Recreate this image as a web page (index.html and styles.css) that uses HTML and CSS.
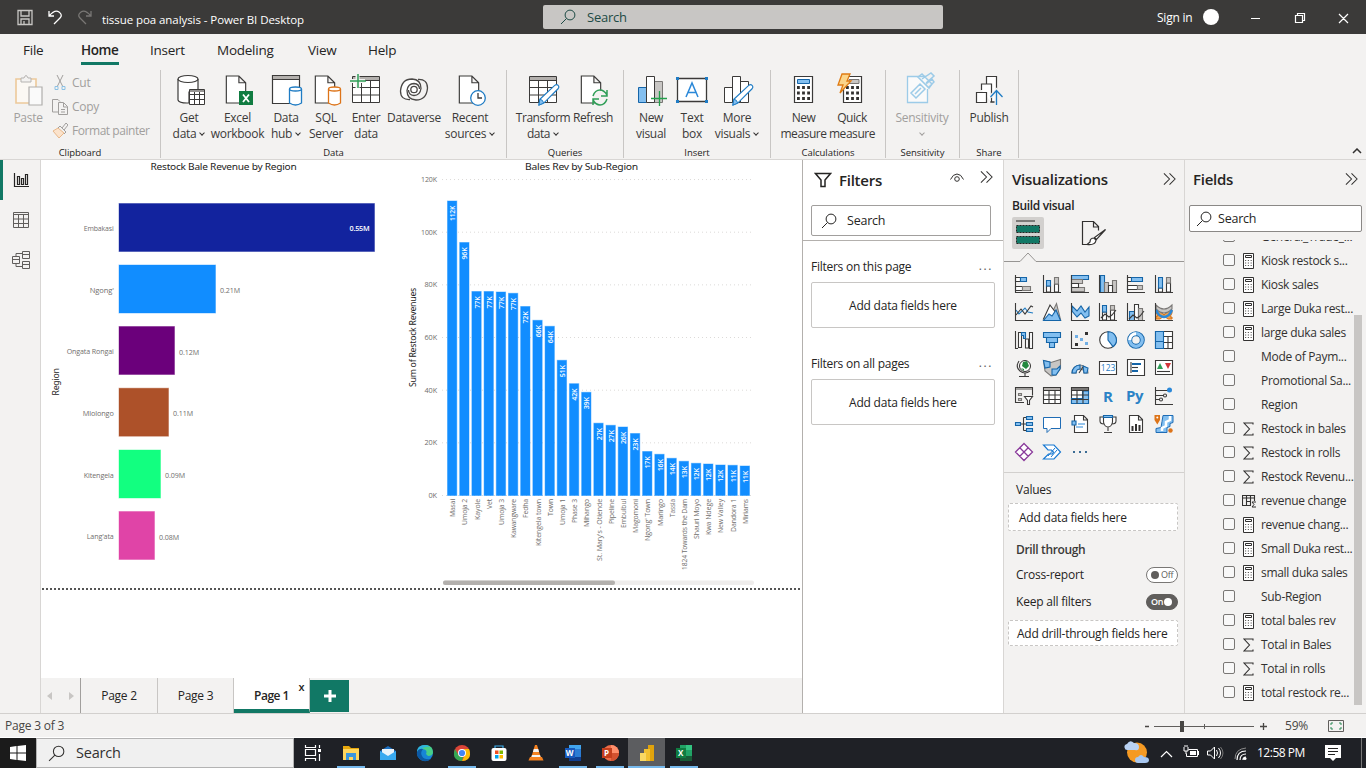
FILE: index.html
```html
<!DOCTYPE html>
<html lang="en">
<head>
<meta charset="utf-8">
<title>tissue poa analysis - Power BI Desktop</title>
<link rel="stylesheet" href="styles.css">
</head>
<body>
<svg class="defs" width="0" height="0">
  <symbol id="calc" viewBox="0 0 11 16"><path d="M.5.5h10v15H.5z" fill="#fff" stroke="#323130"/><path d="M2.500 2.500h6v2h-6z" fill="none" stroke="#323130"/><path d="M2 7.500h7M2 10h7M2 12.500h7" stroke="#605e5c" stroke-dasharray="1.200 1.600"/></symbol>
  <symbol id="sum" viewBox="0 0 11 16"><path d="M10 3.500V2H1l5.500 6L1 14h9v-1.500" fill="none" stroke="#323130" stroke-width="1.100"/></symbol>
  <symbol id="tsum" viewBox="0 0 15 16"><path d="M9 12.500H.5v-10h12V8M.5 5h12M4.500 3v9M8.500 3v9M4 8.500h5" fill="none" stroke="#323130" stroke-width="1.100"/><path d="M14 9H10l2 2.500-2 2.500h4" fill="none" stroke="#323130"/></symbol>
  <symbol id="mag" viewBox="0 0 16 16"><circle cx="10" cy="6" r="4.900" fill="none" stroke="currentColor"/><path d="M6.500 9.500 1 15" stroke="currentColor" fill="none"/></symbol>
  <symbol id="chev2" viewBox="0 0 14 14"><path d="M1 1l6 6-6 6M7 1l6 6-6 6" fill="none" stroke="#323130" stroke-width="1.100"/></symbol>
  <symbol id="doc" viewBox="0 0 22 30"><path d="M1 1h13l7 7v21H1zM14 1v7h7" fill="#fff" stroke="#3b3a39" stroke-width="1.200"/></symbol>
  <symbol id="pen" viewBox="0 0 24 24"><path d="M3 17 18.500 2.500q2-1.500 3.500 0t0 3.500L7 21l-5 2z" fill="#fff" stroke="#1f7cc4" stroke-width="1.200"/><path d="M3 17q3 0 4 4l-5 2z" fill="#83bff0" stroke="#1f7cc4"/></symbol>
</svg>

<header class="title">
  <svg class="qat" width="96" height="34" viewBox="0 0 96 34" fill="none" stroke="#c8c6c4" stroke-width="1.300"><path d="M18 10.500h14v14H18zM21 11v5h8v-5M21 24v-5h8v5M24 21v3"/><path d="M49 11v5h5M49 16q6-7 10-4t1 6l-6 6" stroke="#fff"/><path d="M91 11v5h-5M91 16q-6-7-10-4t-1 6l6 6" stroke="#797775"/></svg>
  <span class="title-text">tissue poa analysis - Power BI Desktop</span>
  <div class="title-search"><svg width="16" height="16"><use href="#mag"/></svg>Search</div>
  <span class="signin">Sign in</span><i class="avatar"></i>
  <svg class="winctl" width="100" height="34" viewBox="0 0 100 34" fill="none" stroke="#fff" stroke-width="1.200"><path d="M4 18.500h9M48.500 15.500h7v7h-7zM50.500 15v-1.500h7v7H56M92 14l9 9M101 14l-9 9" transform="translate(-1)"/></svg>
</header>

<nav class="tabs"><span>File</span><span class="on">Home</span><span>Insert</span><span>Modeling</span><span>View</span><span>Help</span></nav>

<section class="ribbon">
  <div class="grp g-clip">
    <div class="items">
      <div class="it paste dis"><svg width="32" height="32" viewBox="0 0 32 32"><path d="M4 5h20v24H4z" fill="#fbf8f4" stroke="#edc99a" stroke-width="1.600"/><path d="M9 8V4h3q2-5 4 0h3v4z" fill="#f3f2f1" stroke="#b5b3b1"/><path d="M17 13h13v18H17z" fill="#fafafa" stroke="#b0aeac" stroke-width="1.200"/></svg><b>Paste</b></div>
      <div class="mini dis">
        <span><svg width="16" height="16" viewBox="0 0 16 16" fill="none" stroke="#a19f9d"><path d="M5 0l5.500 11M11 0 5.500 11"/><path d="M3 11.500h3v3H3zM10 11.500h3v3h-3z" stroke="#8cc1e4"/></svg>Cut</span>
        <span><svg width="16" height="16" viewBox="0 0 16 16" fill="none" stroke="#a19f9d"><path d="M6 13H.5V.5H6l2 2M6.500 3.500h5l4 4v8h-9zM11.500 4v4h4M9 10.500h4M9 13h4"/></svg>Copy</span>
        <span class="fp"><svg width="16" height="16" viewBox="0 0 16 16" fill="none" stroke="#a19f9d"><path d="M1 8l5-3 6 5-5 5z" fill="#fbe3cc" stroke="#e8b88a"/><path d="M6 5l2-2 6 6-2 2M10 5l4-5 2 2-4 5"/></svg>Format painter</span>
      </div>
    </div>
    <em>Clipboard</em>
  </div>
  <div class="grp g-data">
    <div class="items">
      <div class="it w42"><svg width="32" height="32" viewBox="-2 0 32 32"><path d="M3 5v21q1 3 9 3h2V18h9V5" fill="#fff" stroke="#3b3a39" stroke-width="1.200"/><ellipse cx="13" cy="5" rx="10" ry="3.500" fill="#fff" stroke="#3b3a39" stroke-width="1.200"/><path d="M14.500 15.500h15v15h-15zM14.500 20.500h15M14.500 25.500h15M19.500 18v12M24.500 18v12" fill="#fff" stroke="#3b3a39"/><path d="M15 16h14v2H15z" fill="#979593"/></svg><b>Get<br>data<i class="dn"></i></b></div>
      <div class="it w55"><svg width="32" height="32" viewBox="0 0 32 32"><use href="#doc" x="3" y="1" width="22" height="29"/><path d="M17 17h14v14H17z" fill="#107c41"/><path d="M21 20.500l6 7.500M27 20.500l-6 7.500" stroke="#fff" stroke-width="1.800"/></svg><b>Excel<br>workbook</b></div>
      <div class="it w42"><svg width="32" height="32" viewBox="0 0 32 32"><path d="M2.500 1.500h27v28h-27z" fill="#fff" stroke="#3b3a39" stroke-width="1.200"/><path d="M3 2h26v3H3z" fill="#b3b0ad"/><path d="M2.500 5.500h27" stroke="#3b3a39"/><path d="M19.500 15v14q6 4 12 0V15" fill="#fff" stroke="#1f7cc4" stroke-width="1.300"/><ellipse cx="25.500" cy="15" rx="6" ry="2" fill="#fff" stroke="#1f7cc4" stroke-width="1.300"/></svg><b>Data<br>hub<i class="dn"></i></b></div>
      <div class="it w38"><svg width="32" height="32" viewBox="0 0 32 32"><use href="#doc" x="4" y="1" width="22" height="29"/><path d="M18.500 15v14q6 4 12 0V15" fill="#fff" stroke="#dd7419" stroke-width="1.300"/><ellipse cx="24.500" cy="15" rx="6" ry="2" fill="#fff" stroke="#dd7419" stroke-width="1.300"/></svg><b>SQL<br>Server</b></div>
      <div class="it w42"><svg width="32" height="32" viewBox="0 0 32 32"><path d="M2.500 2.500h27v26h-27zM2.500 6.500h27M2.500 13.500h27M2.500 21h27M11.500 6v22M20.500 6v22" fill="#fff" stroke="#3b3a39"/><path d="M3 3h26v3H3z" fill="#b3b0ad"/><path d="M0 7h15M7.500 0v14" stroke="#f3f2f1" stroke-width="4"/><path d="M0 7h16M8 0v14" stroke="#2f9e57" stroke-width="1.500"/></svg><b>Enter<br>data</b></div>
      <div class="it w54"><svg width="32" height="32" viewBox="0 0 32 32" fill="none" stroke="#4a4846" stroke-width="1.300"><path d="M12 25.500Q2.500 26 2.500 17Q3.500 5 14 5Q23 5.500 23 14.500Q22 21.500 16 21.500Q10.500 21 10.500 16" fill="#fff"/><path d="M20 5.500Q29.500 5 29.500 14Q28.500 26 18 26Q9 25.500 9 16.500Q10 9.500 16 9.500Q21.500 10 21.500 15" /><circle cx="16" cy="15.500" r="3.200"/></svg><b>Dataverse</b></div>
      <div class="it w58"><svg width="32" height="32" viewBox="0 0 32 32"><use href="#doc" x="4" y="1" width="22" height="29"/><circle cx="24" cy="24" r="7.300" fill="#fff" stroke="#1f7cc4" stroke-width="1.300"/><path d="M24 19v5h4" fill="none" stroke="#3b3a39" stroke-width="1.300"/></svg><b>Recent<br>sources<i class="dn"></i></b></div>
    </div>
    <em>Data</em>
  </div>
  <div class="grp g-q">
    <div class="items">
      <div class="it w54 tight"><svg width="32" height="32" viewBox="0 0 32 32"><path d="M2.500 2.500h27v26h-27zM2.500 6.500h27M2.500 13.500h27M2.500 21h27M11.500 6v22M20.500 6v22" fill="#fff" stroke="#3b3a39"/><path d="M3 3h26v3H3z" fill="#b3b0ad"/><use href="#pen" x="10" y="9" width="23" height="23"/></svg><b>Transform<br>data<i class="dn"></i></b></div>
      <div class="it w46 tight"><svg width="32" height="32" viewBox="0 0 32 32"><use href="#doc" x="3" y="1" width="22" height="29"/><circle cx="23" cy="24" r="7.500" fill="#f3f2f1"/><path d="M16 22q2-6 7-6 4 0 7 5M30 16v6h-6M30 25q-2 6-7 6-4 0-7-5M16 31v-6h6" fill="none" stroke="#2f9e57" stroke-width="1.500"/></svg><b>Refresh</b></div>
    </div>
    <em>Queries</em>
  </div>
  <div class="grp g-ins">
    <div class="items">
      <div class="it w40"><svg width="32" height="32" viewBox="0 0 32 32"><path d="M3.500 13.500h8v15h-8z" fill="#83bff0" stroke="#1565a8"/><path d="M19.500 7.500h8v21h-8z" fill="#c8c6c4" stroke="#797775"/><path d="M11.500 2.500h8v26h-8z" fill="#fff" stroke="#3b3a39"/><path d="M16 24.500h16M24.500 17v15" stroke="#22a04b" stroke-width="1.300"/></svg><b>New<br>visual</b></div>
      <div class="it w42"><svg width="32" height="32" viewBox="0 0 32 32"><path d="M1.500 4.500h29v23h-29z" fill="#fff" stroke="#3b3a39" stroke-width="1.300"/><path d="M0 3h3v3H0zM29 3h3v3h-3zM0 26h3v3H0zM29 26h3v3h-3z" fill="#1f7cc4"/><path d="M10 23l6-14 6 14M12 18.500h8" fill="none" stroke="#2b88d8" stroke-width="1.500"/></svg><b>Text<br>box</b></div>
      <div class="it w48"><svg width="32" height="32" viewBox="0 0 32 32"><path d="M3.500 13.500h8v15h-8zM19.500 7.500h8v21h-8zM11.500 2.500h8v26h-8z" fill="#fff" stroke="#3b3a39"/><use href="#pen" x="10" y="9" width="23" height="23"/></svg><b>More<br>visuals<i class="dn"></i></b></div>
    </div>
    <em>Insert</em>
  </div>
  <div class="grp g-calc">
    <div class="items">
      <div class="it w47 tight"><svg width="32" height="32" viewBox="0 0 32 32"><path d="M6.500 2.500h18v26h-18z" fill="#fff" stroke="#3b3a39" stroke-width="1.200"/><path d="M9.500 5.500h12v4h-12z" fill="#83bff0" stroke="#1565a8"/><path d="M9 13.500h13M9 19h13M9 24.500h13" stroke="#323130" stroke-width="2.800" stroke-dasharray="2.800 2.300"/></svg><b>New<br>measure</b></div>
      <div class="it w50 tight"><svg width="32" height="32" viewBox="-1 0 32 32"><path d="M6.500 2.500h18v26h-18z" fill="#fff" stroke="#3b3a39" stroke-width="1.200"/><path d="M12 5.500h10v4H12z" fill="#c8c6c4" stroke="#797775"/><path d="M9 13.500h13M9 19h13M9 24.500h13" stroke="#323130" stroke-width="2.800" stroke-dasharray="2.800 2.300"/><path d="M5 0h8l-3 7h4L3 19l3-8H1z" fill="#fbd58a" stroke="#e07b12" stroke-width="1.300"/></svg><b>Quick<br>measure</b></div>
    </div>
    <em>Calculations</em>
  </div>
  <div class="grp g-sens">
    <div class="items">
      <div class="it w64 dis"><svg width="32" height="32" viewBox="0 0 32 32"><path d="M20 2.500H1.500v26h20V15" fill="#fafafa" stroke="#9ccbe8" stroke-width="1.300"/><path d="M5 19l9-9 5 5-9 9zM9 20l6-6M12 3l4-3 10 10-3 4zM16 5l9-6 3 3-8 7M20 10l6-5 2 3-5 5" fill="none" stroke="#9ccbe8" stroke-width="1.500"/></svg><b>Sensitivity<br><i class="dn"></i></b></div>
    </div>
    <em>Sensitivity</em>
  </div>
  <div class="grp g-share">
    <div class="items">
      <div class="it w58"><svg width="32" height="32" viewBox="-1 0 32 32"><path d="M12.500 10V2.500h10V28H17M7.500 16v-6h10v18.500M2.500 18.500h10v10h-10z" fill="#fff" stroke="#3b3a39" stroke-width="1.200"/><path d="M16 28h7" stroke="#3b3a39"/><path d="M22.500 31V17M16.500 23l6-6.500 6 6.500" stroke="#f3f2f1" stroke-width="4" fill="none"/><path d="M22.500 31V17M16.500 23l6-6.500 6 6.500" fill="none" stroke="#1f7cc4" stroke-width="1.300"/></svg><b>Publish</b></div>
    </div>
    <em>Share</em>
  </div>
  <svg class="collapse" width="10" height="6" viewBox="0 0 10 6"><path d="M1 5l4-4 4 4" fill="none" stroke="#323130" stroke-width="1.500"/></svg>
</section>

<main class="main">
  <aside class="rail">
    <div class="rv on"><svg width="18" height="18" viewBox="0 0 18 18" fill="none" stroke="#252423" stroke-width="1.200"><path d="M2.500 2v13.500H17M5.500 5.500h2v8h-2zM9.500 7.500h2v6h-2zM13.500 3.500h2v10h-2z"/></svg></div>
    <div class="rv"><svg width="18" height="18" viewBox="0 0 18 18" fill="none" stroke="#605e5c"><path d="M1.500 1.500h15v15h-15zM1.500 3.500h15M1.500 8h15M1.500 12.500h15M6.500 4v12M11.500 4v12"/></svg></div>
    <div class="rv"><svg width="18" height="18" viewBox="0 0 18 18" fill="none" stroke="#605e5c"><path d="M.5 5.500h7v7h-7zM.5 8.500h7M10.500.5h7v7h-7zM10.500 3.500h7M10.500 10.500h7v7h-7zM10.500 13.500h7M4 5.500v-3h6M4 12.500v3h6"/></svg></div>
  </aside>

  <section class="stage">
    <svg class="canvas" id="canvas" width="761" height="518" viewBox="41 160 761 518"></svg>
    <div class="pages">
      <div class="arrows"><i class="al"></i><i class="ar"></i></div>
      <div class="pg">Page 2</div><div class="pg">Page 3</div><div class="pg cur">Page 1<i>x</i></div>
      <div class="add"><svg width="12" height="12" viewBox="0 0 12 12"><path d="M0 6h12M6 0v12" stroke="#fff" stroke-width="3"/></svg></div>
    </div>
  </section>

  <section class="filters">
    <div class="fh"><svg width="18" height="16" viewBox="0 0 18 16"><path d="M1.500 1.500h15L11 8v6.500H7V8z" fill="none" stroke="#252423" stroke-width="1.500"/></svg><h2>Filters</h2><svg class="eye" width="14" height="10" viewBox="0 0 14 10" fill="none" stroke="#323130"><path d="M.5 6.500Q3 1 7 1t6.500 5.500"/><circle cx="7" cy="6" r="2.300"/></svg><svg width="13" height="14"><use href="#chev2"/></svg></div>
    <div class="sbox fs"><svg width="16" height="16"><use href="#mag"/></svg>Search</div>
    <hr>
    <div class="flabel"><span>Filters on this page</span><u>...</u></div>
    <div class="fbox">Add data fields here</div>
    <div class="flabel l2"><span>Filters on all pages</span><u>...</u></div>
    <div class="fbox">Add data fields here</div>
  </section>

  <section class="viz">
    <div class="vh"><h2>Visualizations</h2><svg width="13" height="14"><use href="#chev2"/></svg></div>
    <h3>Build visual</h3>
    <div class="vmodes">
      <div class="vm on"><svg width="24" height="26" viewBox="0 0 24 26"><path d="M0 1h19" stroke="#252423"/><path d="M.5 5.500h23v7H.5zM.5 16.500h23v7H.5z" fill="#117865" stroke="#252423" stroke-dasharray="2 1"/></svg></div>
      <div class="vm"><svg width="26" height="26" viewBox="0 0 26 26" fill="none" stroke="#323130" stroke-width="1.200"><path d="M8 24.500H1.500v-23h11l5 5v4M12.500 1.500v5.500h5"/><path d="M24.500 9.500l-9 10-2-2 11-8zM13 18q-4 0-4 4l-3 2.500q8 1 9-4z" fill="#fff"/></svg></div>
    </div>
    <svg class="vrule" width="180" height="10" viewBox="0 0 180 10"><path d="M0 9.500h16l8-8.500 8 8.500h148" fill="none" stroke="#979593"/></svg>
    <div class="vgrid">
      <svg viewBox="0 0 18 18"><path d="M.5 2.500h5v4h-5zM.5 11.500h7v4h-7z" class="w"/><path d="M5.500 2.500h6v4h-6z" class="b"/><path d="M7.500 11.500h8v4h-8z" class="g"/><path d="M.5 0v17.500H18" class="k"/></svg>
      <svg viewBox="0 0 18 18"><path d="M3.500 11h4v6h-4zM11.500 9h4v8h-4z" class="w"/><path d="M3.500 5.500h4V11h-4z" class="b"/><path d="M11.500 2.500h4V9h-4z" class="g"/><path d="M.5 0v17.500H18" class="k"/></svg>
      <svg viewBox="0 0 18 18"><path d="M.5.5h17v4H.5z" class="b"/><path d="M.5 4.500h11v4H.5zM.5 12.500h13v4H.5z" class="g"/><path d="M.5 8.500h7v4h-7z" class="w"/><path d="M.5 0v17.500H18" class="k"/></svg>
      <svg viewBox="0 0 18 18"><path d="M1.500.5h4v17h-4z" class="b"/><path d="M5.500 7.500h4v10h-4zM13.500 5.500h4v12h-4z" class="g"/><path d="M9.500 10.500h4v7h-4z" class="w"/><path d="M.5 0v17.500H18" class="k"/></svg>
      <svg viewBox="0 0 18 18"><path d="M.5 2.500h4v4h-4zM.5 10.500h10v4H.5z" class="w"/><path d="M4.500 2.500h11v4h-11z" class="b"/><path d="M10.500 10.500h5v4h-5z" class="g"/><path d="M.5 0v17.500H18" class="k"/></svg>
      <svg viewBox="0 0 18 18"><path d="M3.500 13h4v4h-4zM11.500 8h4v9h-4z" class="w"/><path d="M3.500 2.500h4V13h-4z" class="b"/><path d="M11.500 2.500h4V8h-4z" class="g"/><path d="M.5 0v17.500H18" class="k"/></svg>

      <svg viewBox="0 0 18 18"><path d="M1 7l3 4 6-6 3 4 5 1" class="bl"/><path d="M1 12l5-6 4 5 6-8 2 1" class="k"/><path d="M.5 0v17.500H18" class="k"/></svg>
      <svg viewBox="0 0 18 18"><path d="M9 10l4.500-9.500 4 16z" class="g"/><path d="M.5 16 7 2l6 8-5 7z" class="w"/><path d="M.5 17.500 6 11l3 2 4-6 4.500 10.500z" class="b"/></svg>
      <svg viewBox="0 0 18 18"><path d="M1 3l5 5 4-5 4 6 4-5v9l-4 2-4-5-4 4-5-6z" class="b"/><path d="M.5 0v17.500H18" class="k"/></svg>
      <svg viewBox="0 0 18 18"><path d="M3.500 9h4v8h-4zM11.500 7h4v10h-4z" class="w"/><path d="M3.500 2.500h4V9h-4z" class="b"/><path d="M11.500 2.500h4V7h-4z" class="g"/><path d="M.5 0v17.500H18M2 15l4-4 4 3 3-2 4-5" class="k"/></svg>
      <svg viewBox="0 0 18 18"><path d="M2.500 8.500h5v9h-5z" class="b"/><path d="M7.500 1.500h4v16h-4z" class="w"/><path d="M11.500 5.500h4v12h-4z" class="g"/><path d="M.5 0v17.500H18M2 16l4-4 4 3 3-2 4-5" class="k"/></svg>
      <svg viewBox="0 0 18 18"><path d="M1 7h4l4 5 4-5h4v3l-2 4h2v2h-4l-4-3-4 3H1v-3h2l-2-3z" fill="#f0a04b" stroke="#d87012"/><path d="M1 2q4 4 8 4t8-4v4q-4 4-8 4T1 6z" class="g"/><path d="M1 7q3 7 8 7t8-7" stroke="#2b88d8" stroke-width="2.500" fill="none"/><path d="M.5 0v17.500H18" class="k"/></svg>

      <svg viewBox="0 0 18 18"><path d="M3.500 1.500h3v15h-3zM10.500 8h3v9h-3zM14.500 1.500h3v16h-3z" class="w"/><path d="M6.500 1.500h4v6h-2v-3h-2z" class="b"/><path d="M.5 0v17.500H3" class="k"/></svg>
      <svg viewBox="0 0 18 18"><path d="M.5 1.500h17v5H.5zM3.500 6.500h11v5h-11zM6.500 11.500h5v5h-5z" class="b"/></svg>
      <svg viewBox="0 0 18 18"><path d="M4 4h3v3H4zM9 7h3v3H9zM14 11h3v3h-3z" fill="#71afe5"/><path d="M4 12h3v3H4zM14 1h3v3h-3z" fill="#323130"/><path d="M.5 0v17.500H18" class="k"/></svg>
      <svg viewBox="0 0 18 18"><circle cx="9" cy="9" r="8.300" class="w"/><path d="M9 .7a8.300 8.300 0 0 1 5 15L9 9z" class="b"/></svg>
      <svg viewBox="0 0 18 18"><circle cx="9" cy="9" r="6.300" fill="none" stroke="#1565a8" stroke-width="5"/><circle cx="9" cy="9" r="6.300" fill="none" stroke="#83bff0" stroke-width="3.200"/><path d="M2.700 9A6.300 6.300 0 0 1 9 2.700" fill="none" stroke="#fff" stroke-width="3"/></svg>
      <svg viewBox="0 0 18 18"><path d="M.5.5h17v17H.5z" class="w"/><path d="M.5.5h8v17h-8z" class="b"/><path d="M9 5.500h8M9 11.500h8M13 6v5M13 12v5" class="k"/><path d="M.5 10.500h8" stroke="#1565a8"/></svg>

      <svg viewBox="0 0 18 18"><circle cx="10" cy="7" r="5.500" fill="#fff" stroke="#323130"/><path d="M8 3l4-1 2 5-3 3-4-3zM6 9l3 1v2z" fill="#22883f"/><path d="M4 2q-4 6 1 10t10 0M10 14v3M4 17.500h10" class="k"/></svg>
      <svg viewBox="0 0 18 18"><path d="M.5 1.500 8 3.500l9.500-3V9L13 16l-5 1-6-5z" class="g"/><path d="M.5 1.500 7 3v5l-5 1zM9 10h5l3-3v3l-4 6H9z" class="b"/></svg>
      <svg viewBox="0 0 18 18"><path d="M1 14a8 8 0 0 1 16 0h-4a4 4 0 0 0-8 0z" class="g"/><path d="M1 14a8 8 0 0 1 8-8v4a4 4 0 0 0-4 4z" class="b"/><path d="M12 7l5 2-1 5h-3z" class="b"/><path d="M8 14l4-6" class="k"/></svg>
      <svg viewBox="0 0 18 18"><path d="M.5 2.500h17v13H.5z" class="w"/><text x="1.800" y="12.200" class="n">123</text></svg>
      <svg viewBox="0 0 18 18"><path d="M.5.5h17v16H.5z" class="w"/><path d="M4 3v11" class="k"/><path d="M5 5h9M5 12h6" stroke="#1565a8" stroke-width="2"/><path d="M5 8.500h6" class="k"/></svg>
      <svg viewBox="0 0 18 18"><path d="M.5 1.500h17v14H.5z" class="w"/><path d="M2 10l3-6 3 6z" fill="#2f9e57"/><path d="M10 4h6l-3 6z" fill="#d13438"/><path d="M2 12.500h13" class="k"/></svg>

      <svg viewBox="0 0 18 18"><path d="M9 15.500H.5V.5h17v8" class="k"/><path d="M1 1h16v2H1z" fill="#a19f9d"/><path d="M3.500 6.500h3v2h-3zM3.500 11.500h3v2h-3z" class="g"/><path d="M9.500 9.500h8l-3 4v4h-2v-4z" class="w"/></svg>
      <svg viewBox="0 0 18 18"><path d="M.5.5h17v16H.5zM.5 3.500h17M.5 8h17M.5 12.500h17M6 3.500v13M12 3.500v13" class="w"/><path d="M1 1h16v2H1z" fill="#b3b0ad"/></svg>
      <svg viewBox="0 0 18 18"><path d="M.5.5h17v16H.5z" class="w"/><path d="M11.500 4h6v12.500H.5v-5h11z" class="b"/><path d="M.5 3.500h17M.5 8h17M.5 12.500h17M6 3.500v13M12 3.500v13" class="k"/><path d="M1 1h16v2H1z" fill="#797775"/></svg>
      <svg viewBox="0 0 18 18"><text x="4" y="15" class="r">R</text></svg>
      <svg viewBox="0 0 18 18" overflow="visible"><text x="-1" y="14" class="r">Py</text></svg>
      <svg viewBox="0 0 18 18"><path d="M1 3.500h12M1 8.500h8M1 12.500h4" class="k"/><circle cx="14.500" cy="3" r="2.500" fill="#2b88d8"/><circle cx="10" cy="8.500" r="1.500" class="w"/><circle cx="6" cy="12.500" r="1.500" class="w"/><path d="M.5 0v17.500H18" class="k"/></svg>

      <svg viewBox="0 0 18 18"><path d="M6 9h5M8.500 2.500v13M8.500 2.500H11M8.500 15.500H11" class="k"/><path d="M.5 7.500h5v3h-5zM11.500 1.500h6v3h-6zM11.500 7.500h6v3h-6zM11.500 13.500h6v3h-6z" class="b"/></svg>
      <svg viewBox="0 0 18 18"><path d="M.5 2.500h17v11H8l-4 4v-4H.5z" fill="#fff" stroke="#1f6cb5"/></svg>
      <svg viewBox="0 0 18 18"><path d="M3.500.5h9l4 4v13h-13zM12.500 1v4h4" class="w"/><path d="M1 6h4v4H1z" class="b"/><path d="M7 9h7M5 12h7" stroke="#2b88d8"/></svg>
      <svg viewBox="0 0 18 18"><path d="M4.500 2H1v4q0 3 4 3M13.500 2H17v4q0 3-4 3M4.500 1v6q1 5 4.500 5t4.500-5V1zM9 12v4M5 17.500h8" class="w"/><path d="M4.500.5h9v2h-9z" class="b"/></svg>
      <svg viewBox="0 0 18 18"><path d="M2.500.5h9l4 4v13h-13zM11.500 1v4h4" class="w"/><path d="M5.500 16v-5M9 16V9M12.500 16v-6" stroke="#323130" stroke-width="2"/></svg>
      <svg viewBox="0 0 18 18"><path d="M8 .5h10v7l-3 1v3l-3 1v5H1v-4l5-1 1-6z" fill="#83bff0" stroke="#1f6cb5"/><path d="M15 1v4l-4 2v4l-4 2v3" stroke="#fff" stroke-width="2.500" fill="none"/><path d="M-.5 0h5.500v5L2.300 9.500-.5 5z" fill="#dd7419"/><circle cx="2.300" cy="2.500" r="1" fill="#fff"/><circle cx="15.500" cy="15.500" r="2.200" fill="#dd7419"/></svg>

      <svg viewBox="0 0 18 18"><path d="M9 .5 13.200 4.700 9 9 4.800 4.700zM9 9l4.200 4.300L9 17.500l-4.200-4.200zM4.800 4.700 9 9l-4.200 4.300L.5 9zM13.200 4.700 17.500 9l-4.300 4.300L9 9z" fill="#fff" stroke="#8a3a9b" stroke-width="1.300"/></svg>
      <svg viewBox="0 0 18 18"><path d="M.5 2h10.500l6.500 7-6.500 7H.5l5-5h4l1-2-2-2H5z" fill="#fff" stroke="#1778d2" stroke-width="1.200"/><path d="M5 13l7-8M8 14l6-7" stroke="#1778d2"/></svg>
      <svg viewBox="0 0 18 18"><path d="M2 8h2v2H2zM8 8h2v2H8zM14 8h2v2h-2z" fill="#3b6c94"/></svg>
    </div>
    <div class="vals">
      <span class="vlab">Values</span>
      <div class="dash d1">Add data fields here</div>
      <h4>Drill through</h4>
      <div class="tog"><span>Cross-report</span><span class="sw"><i></i>Off</span></div>
      <div class="tog t2"><span>Keep all filters</span><span class="sw on">On<i></i></span></div>
      <div class="dash d2">Add drill-through fields here</div>
    </div>
  </section>

  <section class="fields">
    <div class="vh"><h2>Fields</h2><svg width="13" height="14"><use href="#chev2"/></svg></div>
    <div class="sbox ds"><svg width="16" height="16"><use href="#mag"/></svg>Search</div>
    <div class="flist">
      <div class="rows">
        <div class="fr"><i></i><s></s>General_Trade_...</div>
        <div class="fr"><i></i><svg><use href="#calc"/></svg>Kiosk restock s...</div>
        <div class="fr"><i></i><svg><use href="#calc"/></svg>Kiosk sales</div>
        <div class="fr"><i></i><svg><use href="#calc"/></svg>Large Duka rest...</div>
        <div class="fr"><i></i><svg><use href="#calc"/></svg>large duka sales</div>
        <div class="fr"><i></i><s></s>Mode of Paym...</div>
        <div class="fr"><i></i><s></s>Promotional Sa...</div>
        <div class="fr"><i></i><s></s>Region</div>
        <div class="fr"><i></i><svg><use href="#sum"/></svg>Restock in bales</div>
        <div class="fr"><i></i><svg><use href="#sum"/></svg>Restock in rolls</div>
        <div class="fr"><i></i><svg><use href="#sum"/></svg>Restock Revenu...</div>
        <div class="fr"><i></i><svg class="wide"><use href="#tsum"/></svg>revenue change</div>
        <div class="fr"><i></i><svg><use href="#calc"/></svg>revenue chang...</div>
        <div class="fr"><i></i><svg><use href="#calc"/></svg>Small Duka rest...</div>
        <div class="fr"><i></i><svg><use href="#calc"/></svg>small duka sales</div>
        <div class="fr"><i></i><s></s>Sub-Region</div>
        <div class="fr"><i></i><svg><use href="#calc"/></svg>total bales rev</div>
        <div class="fr"><i></i><svg><use href="#sum"/></svg>Total in Bales</div>
        <div class="fr"><i></i><svg><use href="#sum"/></svg>Total in rolls</div>
        <div class="fr"><i></i><svg><use href="#calc"/></svg>total restock re...</div>
      </div>
      <div class="sbar"></div>
    </div>
  </section>
</main>

<footer class="status">
  <span>Page 3 of 3</span>
  <svg class="zoom" width="125" height="16" viewBox="0 0 125 16"><path d="M0 8.500h4M115 8.500h7M118.500 5v7" stroke="#484644" stroke-width="1.300"/><path d="M9 8.500h100M59.500 6v5" stroke="#605e5c"/><path d="M35 3h4v11h-4z" fill="#484644"/></svg>
  <span class="pct">59%</span>
  <svg class="fit" width="16" height="12" viewBox="0 0 16 12" fill="none"><path d="M.5.500h15v11H.5z" stroke="#605e5c"/><path d="M3 5V3h2M11 3h2v2M13 7v2h-2M5 9H3V7" stroke="#2b8a57"/></svg>
</footer>

<div class="taskbar">
  <div class="start"><svg width="16" height="16" viewBox="0 0 16 16" fill="#fff"><path d="M0 2l6.500-1v6.500H0zM7.500 1 16 0v7.500H7.500zM0 8.500h6.500V15L0 14zM7.500 8.500H16V16l-8.500-1z"/></svg></div>
  <div class="tsearch"><svg width="17" height="17"><use href="#mag"/></svg>Search</div>
  <div class="ti tv"><svg width="18" height="18" viewBox="0 0 18 18" fill="none" stroke="#fff" stroke-width="1.200"><path d="M1.500 1v2.500h10V1M1.500 5.500h10v6h-10zM1.500 17v-2.500h10V17M15.500 1v3M15.500 10v7"/><path d="M14 5h3v3h-3z" fill="#fff" stroke="none"/></svg></div>
  <div class="ti run"><svg width="18" height="18" viewBox="0 0 18 18"><path d="M1 2h6l2 2h8v12H1z" fill="#e8a80c"/><path d="M1 5h16v11H1z" fill="#ffd65c"/><path d="M4 16V9h10v7h-3v-3H7v3z" fill="#3a96dd"/></svg></div>
  <div class="ti"><svg width="18" height="18" viewBox="0 0 18 18"><path d="M1 7l8-5 8 5v9H1z" fill="#1b6fc1"/><path d="M3 5h12v6l-6 2-6-2z" fill="#e8f3fb"/><path d="M1 7l8 5 8-5v9H1z" fill="#38a9f0"/></svg></div>
  <div class="ti"><svg width="18" height="18" viewBox="0 0 18 18"><circle cx="9" cy="9" r="8" fill="#1785d6"/><path d="M1 8q2-7 9-7 7 1 7 7 0 4-5 4l-2-2q2-4-3-5-4 0-6 3z" fill="#48cf88"/><path d="M1 8q0-7 8-7 3 0 5 2-5-1-8 2T1 8z" fill="#2fb5dd"/><path d="M1 8q2-4 6-3-3 3-1 7t9 3q-5 4-10 1T1 8z" fill="#0c59a4"/></svg></div>
  <div class="ti run"><svg width="18" height="18" viewBox="0 0 18 18"><circle cx="9" cy="9" r="8" fill="#db4437"/><path d="M9 17l4-8-2-4h5q4 11-7 12z" fill="#fbbc05"/><path d="M2 5l4 7 4 1-1 4Q-2 16 2 5z" fill="#34a853"/><circle cx="9" cy="9" r="4" fill="#fff"/><circle cx="9" cy="9" r="3.100" fill="#4285f4"/></svg></div>
  <div class="ti"><svg width="18" height="18" viewBox="0 0 18 18"><path d="M5 5V2h8v3" stroke="#3fb0ee" fill="none" stroke-width="1.200"/><rect x="1.500" y="4" width="15" height="13" rx="2" fill="#fff"/><path d="M5 6.500h3.500V10H5z" fill="#f25022"/><path d="M9.500 6.500H13V10H9.500z" fill="#7fba00"/><path d="M5 11h3.500v3.500H5z" fill="#00a4ef"/><path d="M9.500 11H13v3.500H9.500z" fill="#ffb900"/></svg></div>
  <div class="ti"><svg width="18" height="18" viewBox="0 0 18 18"><path d="M8 1h2l4 13H4z" fill="#f58220"/><path d="M6.800 5h4.400l.9 3H5.900zM5 11h8l.6 2H4.400z" fill="#f4f4f4"/><path d="M3 13h12l1.500 3.500h-15z" fill="#f58220"/></svg></div>
  <div class="ti run"><svg width="18" height="18" viewBox="0 0 18 18"><path d="M5 1h12v16H5z" fill="#2b7cd3"/><path d="M5 1h12v4H5z" fill="#41a5ee"/><path d="M5 13h12v4H5z" fill="#103f91"/><path d="M1 4h10v10H1z" fill="#185abd"/><text x="1.800" y="12" class="app">W</text></svg></div>
  <div class="ti run"><svg width="18" height="18" viewBox="0 0 18 18"><circle cx="10" cy="9" r="8" fill="#ed6c47"/><path d="M10 1a8 8 0 0 1 8 8h-8z" fill="#ff8f6b"/><path d="M10 17a8 8 0 0 0 8-8h-8z" fill="#d35230"/><path d="M1 4h10v10H1z" fill="#c43e1c"/><text x="3" y="12" class="app">P</text></svg></div>
  <div class="ti run act"><svg width="18" height="18" viewBox="0 0 18 18"><path d="M10 1h6v16h-6z" fill="#e0a30c"/><path d="M6 5h6v12H6z" fill="#f2c02f"/><path d="M2 9h6v8H2z" fill="#f9d863"/></svg></div>
  <div class="ti run"><svg width="18" height="18" viewBox="0 0 18 18"><path d="M5 1h12v16H5z" fill="#21a366"/><path d="M11 1h6v5h-6z" fill="#33c481"/><path d="M5 12h12v5H5z" fill="#185c37"/><path d="M1 4h10v10H1z" fill="#107c41"/><text x="3" y="12" class="app">X</text></svg></div>
  <div class="tray">
    <svg width="132" height="28" viewBox="1124 739 132 28" fill="none"><circle cx="1138" cy="752.500" r="10" fill="#f59a23"/><path d="M1129 750a3 3 0 0 1-1-6q3-5 7-1 5 0 5 4t-4 3z" fill="#b9d2f3"/><path d="M1139 763a3 3 0 0 1 0-6q3-4 6 0 5 0 5 3t-4 3z" fill="#a9c8f1"/><path d="M1162 757l5.500-5.500 5.500 5.500" stroke="#fff" stroke-width="1.200"/><path d="M1189.500 749.500h9v7h-11v-3M1199.500 751v4M1185 747v4h4v-4M1186 745v2M1188 745v2M1187 751v3" stroke="#fff"/><path d="M1191 751h6v4h-6z" fill="#fff"/><path d="M1208.500 751h3l4-4v12l-4-4h-3zM1217.500 750q2 3 0 6M1219.500 748q4 5 0 10" stroke="#fff"/><path d="M1221.500 747q5 6 0 12" stroke="#777"/><path d="M1236 759q0-10 11-11" stroke="#8a8a8a"/><path d="M1238 760q0-9 9-9M1241 760q0-6 6-6M1244 760q0-3 3-3" stroke="#fff" stroke-width="1.200"/><circle cx="1246" cy="758.500" r="1.500" fill="#fff"/></svg>
    <span>12:58 PM</span>
    <svg class="note" width="16" height="16" viewBox="0 0 16 16"><path d="M0 0h16v13h-5l-3 3-3-3H0z" fill="#fff"/><path d="M3 3.500h10M3 6.500h10M3 9.500h7" stroke="#222"/></svg>
    <i class="peek"></i>
  </div>
</div>
<script src="chart.js"></script>
</body>
</html>
```

FILE: styles.css
```css
* { box-sizing: border-box; }
body { margin: 0; width: 1366px; height: 768px; overflow: hidden; display: flex; flex-direction: column; background: #f3f2f1; color: #252423; font: 12px/16px "Open Sans", "Noto Sans", sans-serif; letter-spacing: -0.22px; }
svg { display: block; flex: none; }
i, em { font-style: normal; }
h2, h3, h4 { margin: 0; font-weight: 600; }
.defs { position: absolute; }

.title { height: 34px; flex: none; background: #3b3a39; color: #fff; display: flex; align-items: center; }
.title-text { margin-left: 6px; width: 441px; padding-top: 6px; font-size: 11.500px; letter-spacing: -0.07px; }
.title-search { width: 400px; height: 24px; background: #c8c6c4; border-radius: 2px; color: #1d4a45; display: flex; align-items: center; gap: 11px; padding-left: 17px; font-size: 13px; }
.signin { margin-left: 214px; width: 46px; padding-top: 2px; }
.avatar { width: 16px; height: 16px; border-radius: 50%; background: #fff; }
.winctl { margin-left: 29px; overflow: visible; }

.tabs { height: 32px; flex: none; display: flex; gap: 31px; padding-left: 23px; font-size: 13.500px; line-height: 32px; letter-spacing: -0.25px; }
.tabs span { height: 31px; }
.tabs span:nth-child(1) { width: 27px; }
.tabs span:nth-child(2) { width: 38px; }
.tabs span:nth-child(3) { width: 36px; }
.tabs span:nth-child(4) { width: 60px; }
.tabs span:nth-child(5) { width: 29px; }
.tabs .on { font-weight: 600; border-bottom: 3px solid #117865; letter-spacing: -0.4px; }

.ribbon { height: 94px; flex: none; display: flex; padding-top: 4px; border-bottom: 1px solid #d8d6d4; }
.grp { height: 88px; border-right: 1px solid #c8c6c4; display: flex; flex-direction: column; }
.items { display: flex; flex: none; height: 76px; padding-top: 4px; }
.grp em { font-size: 9.500px; line-height: 14px; text-align: center; letter-spacing: -0.05px; flex: none; }
.it { display: flex; flex-direction: column; align-items: center; }
.it b { font-weight: 400; line-height: 16px; margin-top: 4px; text-align: center; white-space: nowrap; color: #3b3a39; font-size: 12px; letter-spacing: -0.28px; }
.tight b { letter-spacing: -0.45px; }
.it svg { overflow: visible; }
.dis b, .dis span { color: #a19f9d; }
.dn { display: inline-block; width: 4px; height: 4px; border: solid #323130; border-width: 0 1.500px 1.500px 0; transform: rotate(45deg); margin: 0 1px 3px 4px; }
.dis .dn { border-color: #a19f9d; margin-left: 1px; }
.g-clip { width: 161px; }
.g-data { width: 346px; } .g-data .items { padding-left: 7px; }
.g-q { width: 117px; } .g-q .items { padding-left: 9px; }
.g-ins { width: 147px; } .g-ins .items { padding-left: 7px; }
.g-calc { width: 115px; } .g-calc .items { padding-left: 9px; }
.g-sens { width: 74px; } .g-sens .items { padding-left: 4px; }
.g-share { width: 59px; }
.paste { width: 52px; padding-left: 4px; }
.mini { display: flex; flex-direction: column; padding-top: 1px; margin-top: -4px; }
.mini span { display: flex; align-items: center; gap: 4px; height: 24px; letter-spacing: -0.25px; }
.mini .fp { letter-spacing: -0.45px; }
.w38 { width: 38px; } .w40 { width: 40px; } .w42 { width: 42px; } .w46 { width: 46px; } .w47 { width: 47px; } .w48 { width: 48px; } .w50 { width: 50px; } .w54 { width: 54px; } .w55 { width: 55px; } .w58 { width: 58px; } .w64 { width: 64px; }
.collapse { margin: 78px 0 0 333px; }

.main { height: 554px; flex: none; display: flex; border-bottom: 1px solid #d2d0ce; }
.rail { width: 41px; border-right: 1px solid #d8d6d4; }
.rv { height: 40px; display: flex; align-items: center; padding-left: 12px; border-left: 0 solid #117865; }
.rv.on { border-left-width: 3px; padding-left: 9px; }
.stage { width: 761px; display: flex; flex-direction: column; }
.canvas { background: #fff; }
.pages { height: 35px; display: flex; line-height: 35px; font-size: 12px; letter-spacing: -0.25px; }
.arrows { width: 40px; border-right: 1px solid #a19f9d; display: flex; align-items: center; gap: 17px; padding-left: 6px; }
.al, .ar { border: 4px solid transparent; border-left-width: 0; border-right: 5px solid #c8c6c4; }
.ar { border-right-width: 0; border-left: 5px solid #c8c6c4; }
.pg { width: 77px; border-right: 1px solid #c8c6c4; text-align: center; }
.pg:nth-child(3) { width: 76px; }
.cur { background: #fff; border-bottom: 4px solid #117865; position: relative; width: 76px; font-weight: 600; letter-spacing: -0.5px; }
.cur i { position: absolute; right: 5px; top: -9px; font-size: 11px; }
.add { width: 39px; height: 32px; margin-top: 2px; background: #117865; display: flex; align-items: center; justify-content: center; }

.filters { width: 201px; background: #fff; border-left: 1px solid #b3b0ad; padding: 0 8px; }
.fh { height: 39px; display: flex; align-items: center; padding: 0 0 0 3px; margin-bottom: 6px; }
.fh h2 { margin: 0 0 0 7px; width: 112px; }
h2 { font-size: 15px; letter-spacing: -0.25px; line-height: 20px; }
.eye { margin: 0 16px 4px -1px; }
.fh > svg:last-child { margin-bottom: 5px; }
.sbox { background: #fff; border: 1px solid #8a8886; border-radius: 2px; display: flex; align-items: center; font-size: 12.500px; }
.fs { width: 180px; height: 31px; padding-left: 9px; gap: 10px; border-color: #a19f9d; }
.filters hr { margin: 4px -8px 17px; border: 0; border-top: 1px solid #b3b0ad; }
.flabel { display: flex; justify-content: space-between; width: 182px; height: 16px; margin-bottom: 8px; letter-spacing: -0.26px; }
.flabel span { padding-top: 1px; }
.flabel u { text-decoration: none; letter-spacing: 1.600px; color: #605e5c; }
.l2 { margin-top: 27px; }
.fbox { width: 184px; height: 46px; border: 1px solid #c8c6c4; border-radius: 2px; line-height: 46px; text-align: center; }

.viz { width: 181px; border-left: 1px solid #d8d6d4; background: #f3f2f1; }
.vh { height: 38px; display: flex; align-items: center; justify-content: space-between; padding: 0 8px; }
.viz h3 { font-size: 12px; margin-left: 8px; line-height: 16px; letter-spacing: -0.35px; }
.vmodes { display: flex; margin: 3px 0 0 8px; gap: 34px; }
.vm { width: 32px; height: 32px; border-radius: 2px; display: flex; align-items: center; justify-content: center; }
.vm.on { background: #d2d0ce; }
.vrule { margin-top: 3px; }
.vgrid { display: grid; grid-template-columns: repeat(6, 28px); grid-auto-rows: 28px; padding: 13px 0 0 11px; height: 211px; border-bottom: 1px solid #d2d0ce; }
.vgrid svg { width: 18px; height: 18px; overflow: visible; }
.w, .b, .g, .k, .bl { stroke-width: 1.100; }
.w { fill: #fff; stroke: #3b3a39; }
.b { fill: #83bff0; stroke: #1565a8; }
.g { fill: #c8c6c4; stroke: #797775; }
.k { fill: none; stroke: #3b3a39; }
.bl { fill: none; stroke: #1f7cc4; }
.n { font: 8.500px "Open Sans", sans-serif; fill: #1f7cc4; letter-spacing: 0; }
.r { font: 700 15px "Open Sans", sans-serif; fill: #2b83c6; letter-spacing: -0.5px; }
.vals { padding: 9px 6px 0 4px; }
.vlab { margin-left: 8px; display: block; height: 21px; }
.dash { border: 1px dashed #c8c6c4; background: #fff; border-radius: 2px; }
.d1 { height: 28px; line-height: 28px; padding-left: 10px; }
.d2 { height: 26px; line-height: 26px; padding-left: 8px; margin-top: 10px; white-space: nowrap; letter-spacing: -0.24px; }
.vals h4 { margin: 11px 0 9px 8px; font-size: 12px; height: 16px; letter-spacing: -0.35px; color: #3b3a39; }
.tog { display: flex; justify-content: space-between; padding-left: 8px; height: 16px; }
.t2 { margin-top: 11px; }
.sw { width: 32px; height: 16px; border: 1px solid #797775; border-radius: 8px; background: #fff; font-size: 9px; line-height: 14px; display: flex; align-items: center; gap: 2px; padding-left: 4px; color: #605e5c; }
.sw i { width: 8px; height: 8px; border-radius: 50%; background: #605e5c; }
.sw.on { background: #605e5c; color: #fff; border-color: #605e5c; font-weight: 600; gap: 1px; }
.sw.on i { background: #fff; }

.fields { width: 182px; border-left: 1px solid #d8d6d4; }
.fields .vh { margin-bottom: 7px; }
.ds { margin-left: 4px; width: 173px; height: 27px; padding-left: 6px; gap: 6px; }
.flist { margin-top: 8px; height: 465px; display: flex; overflow: hidden; }
.rows { width: 169px; margin-top: -16px; }
.fr { height: 24px; display: flex; align-items: center; padding-left: 38px; white-space: nowrap; color: #323130; letter-spacing: -0.3px; line-height: 18px; padding-top: 1px; }
.fr i { width: 12px; height: 12px; border: 1px solid #797775; border-radius: 2px; margin: -1px 8px 0 0; flex: none; background: #f8f8f8; }
.fr svg, .fr s { width: 11px; height: 16px; margin-right: 7px; flex: none; }
.fr svg.wide { width: 15px; margin: 0 4px 0 -1px; }
.sbar { width: 8px; height: 390px; background: #c8c6c4; margin-top: 75px; }

.status { height: 24px; flex: none; display: flex; align-items: center; padding-left: 5px; border-bottom: 1px solid #fff; color: #484644; }
.status span:first-child { width: 1140px; }
.pct { width: 43px; margin-left: 15px; }

.taskbar { height: 30px; flex: none; background: #1f2126; display: flex; }
.start { width: 36px; display: flex; align-items: center; justify-content: center; background: #1b1b1b; }
.tsearch { width: 258px; background: #f0f0f0; border: 1px solid #b3b3b3; display: flex; align-items: center; gap: 11px; padding-left: 11px; font-size: 14.500px; color: #323130; }
.ti { width: 37px; display: flex; align-items: center; justify-content: center; position: relative; }
.tv { width: 38px; }
.run::after { content: ""; position: absolute; left: 5px; right: 4px; bottom: 0; height: 2px; background: #76b9ed; }
.act { background: #5c5d60; }
.act::after { left: 0; right: 0; }
.app { font: 700 8px "Open Sans", sans-serif; fill: #fff; letter-spacing: 0; }
.tray { margin-left: auto; display: flex; align-items: center; color: #fff; font-size: 12px; letter-spacing: -0.5px; }
.tray span { width: 68px; margin-left: 2px; white-space: nowrap; }
.note { margin-right: 20px; }
.peek { width: 5px; height: 30px; border-left: 1px solid #777; }

.axis { font: 7px "Open Sans", sans-serif; fill: #706e6c; letter-spacing: -0.1px; }
.ctitle { font: 9px "Noto Sans", sans-serif; fill: #252423; }
.atitle { font: 8px "Noto Sans", sans-serif; fill: #252423; }
.val { font: 600 7px "Open Sans", sans-serif; fill: #fff; }
```

FILE: chart.js
```javascript
const out = [];
const text = (x, y, cls, s, anchor = 'start', rot = 0, len = 0) =>
  out.push(`<text class="${cls}" text-anchor="${anchor}" transform="translate(${x} ${y}) rotate(${rot})"${len ? ` textLength="${len}" lengthAdjust="spacingAndGlyphs"` : ''}>${s}</text>`);

// Revenue by region
text(223.500, 170, 'ctitle', 'Restock Bale Revenue by Region', 'middle', 0, 146);
text(58.500, 382, 'atitle', 'Region', 'middle', -90, 27);
const regions = [
  ['Embakasi', 203.500, 375, '#12239e', '0.55M', 30], ['Ngong\'', 265, 216, '#118dff', '0.21M', 24],
  ['Ongata Rongai', 326.500, 175, '#6b007b', '0.12M', 47], ['Mlolongo', 388.200, 169, '#ad5129', '0.11M', 31],
  ['Kitengela', 450, 161, '#12ff80', '0.09M', 30], ['Lang\'ata', 511.500, 155, '#e044a7', '0.08M', 27]
];
regions.forEach(([name, y, x2, color, v, len], i) => {
  out.push(`<rect x="119" y="${y}" width="${x2 - 119.500}" height="48" fill="${color}" stroke="${color}" stroke-opacity=".4"/>`);
  text(113.700, y + 27.500, 'axis', name, 'end', 0, len);
  if (i) text(x2 + 4, y + 28, 'axis', v, 'start', 0, 20);
  else text(369.500, y + 27.500, 'val', v, 'end', 0, 20);
});

// Revenue by sub-region
text(581.500, 170, 'ctitle', 'Bales Rev by Sub-Region', 'middle', 0, 113);
text(416, 337.500, 'atitle', 'Sum of Restock Revenues', 'middle', -90, 99);
for (let k = 0; k <= 120; k += 20) {
  const y = 495.500 - k * 2.633;
  text(437, y + 2.500, 'axis', k + 'K', 'end', 0, k > 99 ? 16 : k ? 12.500 : 8.500);
  out.push(`<path d="M442 ${y}H754" stroke="#dcdad8" stroke-dasharray="1 3"/>`);
}
const bars = [
  ['Masai', 201, '112K', 18], ['Umoja 2', 242.500, '96K', 26], ['Kayole', 291.500, '77K', 21], ['Vet', 291.500, '77K', 10],
  ['Umoja 3', 292, '77K', 26], ['Kawangware', 293.300, '77K', 39], ['Fedha', 306.500, '72K', 19], ['Kitengela town', 320.300, '66K', 47],
  ['Town', 326.300, '64K', 17], ['Umoja 1', 360.300, '51K', 26], ['Phase 3', 383.700, '42K', 24], ['Mihango', 392.300, '39K', 28],
  ['St. Mary\'s - Otiende', 423.200, '27K', 62], ['Pipeline', 425.300, '27K', 25], ['Embulbul', 427, '26K', 29], ['Magomoni', 433.500, '23K', 34],
  ['Ngong\' Town', 451.500, '17K', 42], ['Maringo', 454.300, '16K', 27], ['Tassia', 458.300, '14K', 18], ['1824 Towards the Dam', 461.300, '13K', 71],
  ['Shauri Moyo', 463.300, '12K', 40], ['Kwa Ndege', 464, '12K', 36], ['New Valley', 465, '12K', 34], ['Dandora 1', 465.300, '11K', 33], ['Miriams', 466, '11K', 25]
];
bars.forEach(([name, y, v, len], i) => {
  const x = 447 + i * 12.195;
  out.push(`<rect x="${x + .5}" y="${y}" width="9.300" height="${495.500 - y}" fill="#118dff" stroke="#118dff" stroke-opacity=".45"/>`);
  text(x + 8.200, y + 5, 'val', v, 'end', -90, v.length > 3 ? 15 : 12);
  text(x + 8.200, 499, 'axis', name, 'end', -90, len);
});
out.push('<rect x="443" y="580.500" width="311" height="4.500" rx="2" fill="#efedec"/><rect x="443" y="580.500" width="172" height="4.500" rx="2" fill="#b3b0ad"/>');
out.push('<path d="M42 589H801" stroke="#555" stroke-width="2" stroke-dasharray="2 2"/>');
document.getElementById('canvas').innerHTML = out.join('');
```
